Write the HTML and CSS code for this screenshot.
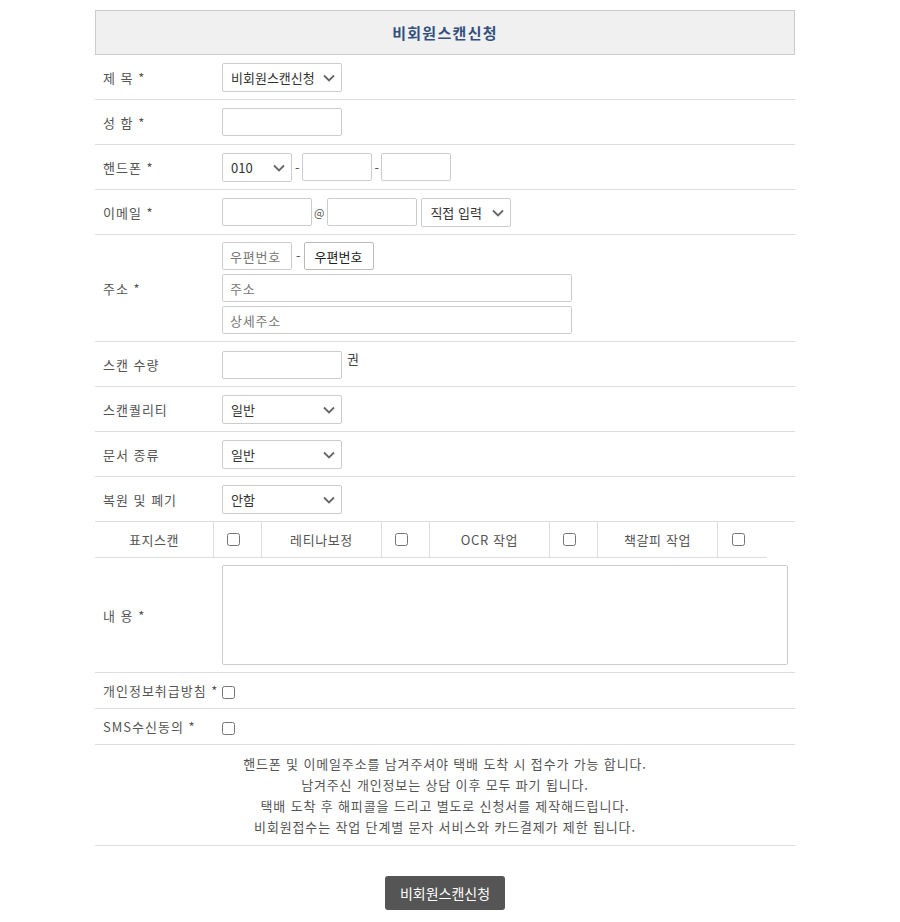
FILE: index.html
```html
<!DOCTYPE html>
<html lang="ko">
<head>
    <meta charset="UTF-8">
    <meta name="viewport" content="width=device-width, initial-scale=1.0">
    <title>비회원스캔신청</title>
    <link rel="stylesheet" href="styles.css">
</head>
<body>
    <!-- 비회원 스캔 신청서 -->
    <div class="form-wrap">
        <div class="form-title">비회원스캔신청</div>

        <table class="form-table">
            <tr>
                <th>제 목 *</th>
                <td>
                    <span class="sel-box"><select class="sel w120">
                        <option>비회원스캔신청</option>
                    </select><svg class="arrow" viewBox="0 0 12 8"><path d="M1 1.5l5 5 5-5"/></svg></span>
                </td>
            </tr>
            <tr>
                <th>성 함 *</th>
                <td><input type="text" class="inp w120"></td>
            </tr>
            <tr>
                <th>핸드폰 *</th>
                <td>
                    <span class="sel-box"><select class="sel w70">
                        <option>010</option>
                        <option>011</option>
                        <option>016</option>
                    </select><svg class="arrow" viewBox="0 0 12 8"><path d="M1 1.5l5 5 5-5"/></svg></span><span class="sep">-</span><input type="text" class="inp w70"><span class="sep">-</span><input type="text" class="inp w70">
                </td>
            </tr>
            <tr>
                <th>이메일 *</th>
                <td>
                    <input type="text" class="inp w90"><span class="sep at">@</span><input type="text" class="inp w90"><span class="sel-box gap3"><select class="sel w90">
                        <option>직접 입력</option>
                    </select><svg class="arrow" viewBox="0 0 12 8"><path d="M1 1.5l5 5 5-5"/></svg></span>
                </td>
            </tr>
            <tr class="addr-row">
                <th>주소 *</th>
                <td>
                    <div class="addr-line">
                        <input type="text" class="inp w70" placeholder="우편번호"><span class="sep zip">-</span><button type="button" class="zip-btn">우편번호</button>
                    </div>
                    <div class="addr-line"><input type="text" class="inp w350" placeholder="주소"></div>
                    <div class="addr-line"><input type="text" class="inp w350" placeholder="상세주소"></div>
                </td>
            </tr>
            <tr>
                <th>스캔 수량</th>
                <td><input type="text" class="inp w120"><span class="unit">권</span></td>
            </tr>
            <tr>
                <th>스캔퀄리티</th>
                <td>
                    <span class="sel-box"><select class="sel w120">
                        <option>일반</option>
                    </select><svg class="arrow" viewBox="0 0 12 8"><path d="M1 1.5l5 5 5-5"/></svg></span>
                </td>
            </tr>
            <tr>
                <th>문서 종류</th>
                <td>
                    <span class="sel-box"><select class="sel w120">
                        <option>일반</option>
                    </select><svg class="arrow" viewBox="0 0 12 8"><path d="M1 1.5l5 5 5-5"/></svg></span>
                </td>
            </tr>
            <tr>
                <th>복원 및 폐기</th>
                <td>
                    <span class="sel-box"><select class="sel w120">
                        <option>안함</option>
                    </select><svg class="arrow" viewBox="0 0 12 8"><path d="M1 1.5l5 5 5-5"/></svg></span>
                </td>
            </tr>
            <tr>
                <td colspan="2" class="opt-cell">
                    <div class="opt-row">
                        <div class="opt-label first">표지스캔</div>
                        <div class="opt-check"><input type="checkbox"></div>
                        <div class="opt-label">레티나보정</div>
                        <div class="opt-check"><input type="checkbox"></div>
                        <div class="opt-label">OCR 작업</div>
                        <div class="opt-check"><input type="checkbox"></div>
                        <div class="opt-label">책갈피 작업</div>
                        <div class="opt-check last"><input type="checkbox"></div>
                    </div>
                </td>
            </tr>
            <tr class="memo-row">
                <th>내 용 *</th>
                <td><textarea class="memo"></textarea></td>
            </tr>
            <tr class="agree-row">
                <th>개인정보취급방침 *</th>
                <td><input type="checkbox"></td>
            </tr>
            <tr class="agree-row">
                <th>SMS수신동의 *</th>
                <td><input type="checkbox"></td>
            </tr>
        </table>

        <!-- 안내 문구 -->
        <div class="notice">
            핸드폰 및 이메일주소를 남겨주셔야 택배 도착 시 접수가 가능 합니다.<br>
            남겨주신 개인정보는 상담 이후 모두 파기 됩니다.<br>
            택배 도착 후 해피콜을 드리고 별도로 신청서를 제작해드립니다.<br>
            비회원접수는 작업 단계별 문자 서비스와 카드결제가 제한 됩니다.
        </div>

        <div class="btn-area">
            <button type="button" class="submit-btn">비회원스캔신청</button>
        </div>
    </div>
</body>
</html>
```

FILE: styles.css
```css
body {
    margin: 0;
    padding: 10px 0 20px;
    background: #fff;
    font-family: "Noto Sans CJK KR", "Liberation Sans", sans-serif;
    font-size: 13px;
    color: #555;
}
.form-wrap {
    width: 700px;
    margin-left: 95px;
}
.form-title {
    height: 43px;
    line-height: 43px;
    border: 1px solid #ccc;
    background: #f0f0f0;
    text-align: center;
    font-size: 15px;
    letter-spacing: 1.3px;
    font-weight: bold;
    color: #34507e;
}
.form-table {
    width: 100%;
    border-collapse: collapse;
}
.form-table th,
.form-table td {
    border-bottom: 1px solid #ddd;
    padding: 0;
    height: 44px;
    vertical-align: middle;
    text-align: left;
}
.form-table th {
    width: 119px;
    padding-left: 8px;
    font-weight: normal;
    letter-spacing: 1px;
    white-space: nowrap;
    color: #555;
}
.inp,
.sel {
    box-sizing: border-box;
    height: 28px;
    border: 1px solid #ccc;
    border-radius: 2px;
    padding: 0 7px;
    font-family: "Noto Sans CJK KR", "Liberation Sans", sans-serif;
    font-size: 13px;
    color: #333;
    background: #fff;
    vertical-align: middle;
    margin: 0;
}
.inp::placeholder {
    color: #777;
    letter-spacing: 0.8px;
}
.sel {
    -webkit-appearance: none;
    appearance: none;
    height: 29px;
    padding: 0 20px 0 8px;
    outline: none;
}
.sel-box {
    position: relative;
    display: inline-block;
    vertical-align: middle;
}
.sel-box .sel {
    display: block;
}
.sel-box.gap3 {
    margin-left: 4px;
}
.arrow {
    position: absolute;
    right: 7px;
    top: 11px;
    width: 12px;
    height: 8px;
    pointer-events: none;
}
.arrow path {
    fill: none;
    stroke: #666;
    stroke-width: 1.8;
}
.sep {
    display: inline-block;
    margin: 0 2px 0 3px;
    vertical-align: middle;
    color: #555;
}
.sep.at {
    margin: 0 3px 0 2px;
    font-size: 11px;
}
.sep.zip {
    margin: 0 3px 0 4px;
}
.w70 { width: 70px; }
.w90 { width: 90px; }
.w120 { width: 120px; }
.w350 { width: 350px; }
.unit {
    margin-left: 5px;
    vertical-align: 4px;
    color: #444;
}
.form-table .addr-row td {
    padding: 7px 0;
}
.addr-line + .addr-line {
    margin-top: 4px;
}
.addr-line .inp,
.addr-line .sep {
    vertical-align: top;
}
.addr-line .sep {
    line-height: 28px;
}
.zip-btn {
    box-sizing: border-box;
    width: 70px;
    height: 28px;
    margin: 0;
    border: 1px solid #bbb;
    border-radius: 2px;
    background: #fff;
    font-family: "Noto Sans CJK KR", "Liberation Sans", sans-serif;
    font-size: 13px;
    color: #222;
    vertical-align: top;
}
.form-table td.opt-cell {
    height: auto;
    border-bottom: none;
}
.opt-row {
    display: flex;
    width: 672px;
    height: 36px;
    box-sizing: border-box;
    border-bottom: 1px solid #ddd;
}
.opt-label,
.opt-check {
    box-sizing: border-box;
    border-right: 1px solid #ddd;
    display: flex;
    align-items: center;
    justify-content: center;
}
.opt-label {
    width: 120px;
    letter-spacing: 0.6px;
    color: #555;
}
.opt-label.first {
    width: 119px;
}
.opt-check {
    width: 48px;
    padding-right: 8px;
}
.opt-check.last {
    width: 49px;
    border-right: none;
}
input[type="checkbox"] {
    width: 13px;
    height: 13px;
    margin: 0;
    vertical-align: middle;
}
.form-table .memo-row td {
    padding: 7px 0;
    height: auto;
}
.memo {
    box-sizing: border-box;
    display: block;
    width: 566px;
    height: 100px;
    border: 1px solid #ccc;
    border-radius: 2px;
    resize: none;
    font-family: "Noto Sans CJK KR", "Liberation Sans", sans-serif;
}
.form-table .agree-row th,
.form-table .agree-row td {
    height: 35px;
}
.notice {
    padding: 8px 0;
    border-bottom: 1px solid #ddd;
    text-align: center;
    line-height: 21px;
    letter-spacing: 0.85px;
    color: #555;
}
.btn-area {
    margin-top: 30px;
    text-align: center;
}
.submit-btn {
    width: 120px;
    height: 34px;
    border: none;
    border-radius: 3px;
    background: #555;
    color: #fff;
    font-family: "Noto Sans CJK KR", "Liberation Sans", sans-serif;
    font-size: 14px;
    cursor: pointer;
}
```
